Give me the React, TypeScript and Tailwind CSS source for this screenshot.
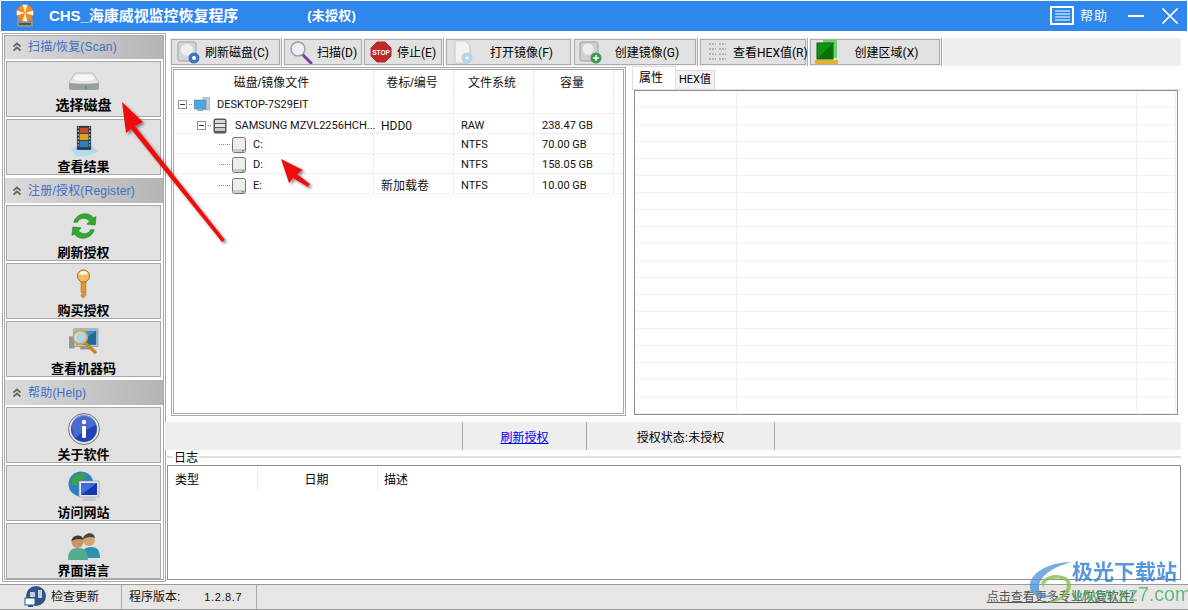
import type { ReactNode } from "react";

const cjk = "font-['Liberation_Sans','Noto_Sans_CJK_SC',sans-serif]";
const roboto = "font-['Roboto','Noto_Sans_CJK_SC',sans-serif]";

function Disk({ w = 14 }: { w?: number }) {
  return (
    <svg width={w} height={w + 2} viewBox="0 0 14 16">
      <rect x="0.5" y="0.5" width="13" height="15" rx="2" fill="#eceeea" stroke="#6f7570" />
      <rect x="1" y="12" width="12" height="3" fill="#c9cdc8" />
      <rect x="10" y="13" width="2" height="1.5" fill="#3cb043" />
    </svg>
  );
}

function DrivePlate() {
  return (
    <svg width="32" height="22" viewBox="0 0 32 22">
      <path d="M7 3h18l6 9v5a2 2 0 0 1-2 2H3a2 2 0 0 1-2-2v-5z" fill="#9a9d9d" />
      <path d="M7 2h18l6 9.5c-2 2-28 2-30 0z" fill="#e6e7e6" stroke="#a5a8a8" strokeWidth=".6" />
      <ellipse cx="16" cy="7" rx="10" ry="3.2" fill="#f6f6f6" />
      <rect x="17" y="15" width="2" height="3" fill="#46b04a" />
    </svg>
  );
}

function FilmIcon() {
  return (
    <svg width="34" height="32" viewBox="0 0 34 36">
      <path d="M2 27 L11 23 H26 L33 30 L20 35 H8z" fill="#a9d8f0" opacity=".8" />
      <rect x="9" y="1" width="16" height="27" fill="#26394c" />
      <rect x="12" y="3" width="10" height="6" fill="#c74a22" />
      <rect x="12" y="10" width="10" height="7" fill="#e2a11d" />
      <rect x="12" y="18" width="10" height="7" fill="#2f82b8" />
      <path d="M10 3h1M10 7h1M10 11h1M10 15h1M10 19h1M10 23h1M23 3h1M23 7h1M23 11h1M23 15h1M23 19h1M23 23h1" stroke="#d8e3ea" strokeWidth="2" />
    </svg>
  );
}

function RefreshIcon() {
  return (
    <svg width="26" height="30" viewBox="0 0 28 32">
      <path d="M3 12C5 3 18-1 24 7l3-1-1 9-9-1 3-3C16 6 9 7 7 12z" fill="#32a92c" stroke="#1c7a1c" strokeWidth=".6" />
      <path d="M25 20C23 29 10 33 4 25l-3 1 1-9 9 1-3 3c4 5 11 4 13-1z" fill="#32a92c" stroke="#1c7a1c" strokeWidth=".6" />
    </svg>
  );
}

function KeyIcon() {
  return (
    <svg width="15" height="30" viewBox="0 0 16 32">
      <path d="M5.500 13h5v15l-2.500 3-2.500-2v-2h1.500v-2h-1.500z" fill="#e0962a" stroke="#a5671a" strokeWidth=".6" />
      <circle cx="8" cy="7.500" r="6.500" fill="#f4bb63" stroke="#a5671a" />
      <path d="M3.500 6a4.500 4 0 0 1 9 0z" fill="#fbf3e3" />
    </svg>
  );
}

function MachineIcon() {
  return (
    <svg width="30" height="28" viewBox="0 0 32 30">
      <rect x="0" y="10" width="6" height="13" fill="#8d98a1" />
      <rect x="5" y="2" width="26" height="19" fill="#b5c3cb" stroke="#74838d" strokeWidth=".6" />
      <rect x="8" y="4" width="21" height="15" fill="#3b8fc4" />
      <path d="M8 19 29 4v15z" fill="#1f6a9e" />
      <rect x="12" y="21" width="11" height="3" fill="#87919a" />
      <path d="M18 18l10 9" stroke="#c58a1d" strokeWidth="3.500" strokeLinecap="round" />
      <circle cx="12" cy="11" r="7.500" fill="#d7ecf6" fillOpacity=".75" stroke="#d9a437" strokeWidth="2" />
    </svg>
  );
}

function InfoIcon() {
  return (
    <svg width="32" height="32" viewBox="0 0 32 32">
      <circle cx="16" cy="16" r="15.500" fill="#e3e3e3" stroke="#777" />
      <circle cx="16" cy="16" r="13" fill="#2243b8" />
      <path d="M4 15a12 12 0 0 1 24-3C22 14 12 20 8 25 5 22 4 19 4 15z" fill="#6080da" opacity=".65" />
      <circle cx="16" cy="9" r="2.200" fill="#fff" />
      <rect x="14" y="13" width="4" height="12" rx="1" fill="#fff" />
    </svg>
  );
}

function GlobeIcon() {
  return (
    <svg width="32" height="32" viewBox="0 0 32 32">
      <circle cx="13" cy="13" r="12.500" fill="#2f7fc4" />
      <path d="M5 6c4-4 11-5 14-2l-3 4-5 1-1 5-4 1-3-3z" fill="#3aa541" />
      <path d="M12 18l5 1 1 4-4 2z" fill="#3aa541" />
      <rect x="11" y="10" width="20" height="16" fill="#e8e8e8" stroke="#8a8a8a" strokeWidth=".6" />
      <rect x="13" y="12" width="16" height="12" fill="#1238b8" />
      <path d="M13 12h16L13 24z" fill="#3d6cdc" />
      <path d="M16 26h10l3 4H14z" fill="#c9c9c9" />
    </svg>
  );
}

function PeopleIcon() {
  return (
    <svg width="32" height="28" viewBox="0 0 32 28">
      <path d="M14 26c0-8 3-11 9-11s9 3 9 11z" fill="#2d93ad" />
      <circle cx="21" cy="8" r="6" fill="#d4a273" />
      <path d="M15 7c0-6 11-9 12-1-4-2-8-1-12 1z" fill="#444" />
      <path d="M0 28c0-9 3-12 10-12s9 3 10 12z" fill="#53ab8c" />
      <circle cx="9.500" cy="10" r="6" fill="#ca9466" />
      <path d="M3.500 9c0-6 11-8 12-1-4-2-8-1-12 1z" fill="#3a3a3a" />
    </svg>
  );
}

function DoubleChevron() {
  return (
    <svg width="8" height="10" viewBox="0 0 8 10" fill="none" stroke="#666" strokeWidth="1.800">
      <path d="M.5 4.500 4 1.500l3.500 3M.5 8.500 4 5.500l3.500 3" />
    </svg>
  );
}

function SideHeader({ label, first }: { label: string; first?: boolean }) {
  return (
    <div
      className={`-ml-[1px] flex shrink-0 items-center bg-gradient-to-r from-[#dcdcdc] to-[#b4b4b4] pl-[9px] ${first ? "-mt-[1px] h-[24px]" : "mt-[1px] h-[25px]"}`}
    >
      <DoubleChevron />
      <span className="ml-[7px] text-[12px] tracking-[0.2px] text-[#3b6fc9]">{label}</span>
    </div>
  );
}

function SideButton({ icon, label, top = 5, big, bottom = 0 }: { icon: ReactNode; label: string; top?: number; big?: boolean; bottom?: number }) {
  return (
    <div className="relative ml-[1px] mr-[2px] flex h-[56px] shrink-0 flex-col items-center border border-[#a9a9a9] bg-[#e1e1e1]">
      <div className="flex justify-center" style={{ marginTop: top }}>{icon}</div>
      <span
        className={`absolute left-0 right-0 text-center font-bold leading-[15px] text-black ${big ? "text-[14px]" : "text-[13px]"}`}
        style={{ bottom }}
      >
        {label}
      </span>
    </div>
  );
}

function ToolBtn({ w, icon, label, ml = 0, pad = 9 }: { w: number; icon: ReactNode; label: string; ml?: number; pad?: number }) {
  return (
    <div className="flex h-[26px] shrink-0 items-center border border-[#ababab] bg-[#e1e1e1]" style={{ width: w, marginLeft: ml }}>
      <div className="flex h-full w-[32px] shrink-0 items-center justify-center">{icon}</div>
      <span className={`flex-1 pt-[2px] text-center text-[12px] whitespace-nowrap text-black ${roboto}`} style={{ paddingRight: pad }}>{label}</span>
    </div>
  );
}

function Sep() {
  return <div className="ml-[1px] h-[28px] w-[2px] shrink-0 border-l border-r border-l-[#ababab] border-r-white" />;
}

const rows = [
  { level: 0, name: "DESKTOP-7S29EIT", tag: "", fs: "", size: "" },
  { level: 1, name: "SAMSUNG MZVL2256HCH...", tag: "HDD0", fs: "RAW", size: "238.47 GB" },
  { level: 2, name: "C:", tag: "", fs: "NTFS", size: "70.00 GB" },
  { level: 2, name: "D:", tag: "", fs: "NTFS", size: "158.05 GB" },
  { level: 2, name: "E:", tag: "新加载卷", fs: "NTFS", size: "10.00 GB" },
];

function Expander() {
  return (
    <span className="flex h-[9px] w-[9px] shrink-0 items-center justify-center border border-[#8a94a6] bg-white">
      <span className="h-[1px] w-[5px] bg-[#333]" />
    </span>
  );
}

function TreeRow({ r }: { r: (typeof rows)[number] }) {
  return (
    <div className={`grid h-[20px] grid-cols-[200px_80px_80px_80px] border-b border-dotted border-[#e4e4e4] text-[11px] text-[#111] ${roboto}`}>
      <div className="flex items-center border-r border-dotted border-[#e4e4e4] pt-[2px]">
        {r.level === 0 && (
          <div className="ml-[4px] flex items-center">
            <Expander />
            <span className="mx-[2px] w-[3px] border-t border-dotted border-[#888]" />
            <svg width="16" height="15" viewBox="0 0 16 15">
              <rect x="9" y="0" width="7" height="13" fill="#c3cbd6" stroke="#7d8ba0" strokeWidth=".5" />
              <rect x="0" y="3" width="12" height="9" fill="#4ea6dd" stroke="#5f87a8" strokeWidth=".6" />
              <rect x="3" y="12" width="6" height="2" fill="#7fb2d4" />
            </svg>
            <span className="ml-[7px] pt-[1px]">{r.name}</span>
          </div>
        )}
        {r.level === 1 && (
          <div className="ml-[23px] flex items-center">
            <Expander />
            <span className="mx-[2px] w-[3px] border-t border-dotted border-[#888]" />
            <svg width="14" height="16" viewBox="0 0 14 16">
              <rect x="0.500" y="0.500" width="13" height="15" rx="2" fill="#555c5a" />
              <rect x="2" y="2" width="10" height="3" fill="#d7d9d8" />
              <rect x="2" y="6" width="10" height="3" fill="#e8e9e8" />
              <rect x="2" y="10" width="10" height="3" fill="#c9cbca" />
            </svg>
            <span className="ml-[8px] whitespace-nowrap pt-[1px]">{r.name}</span>
          </div>
        )}
        {r.level === 2 && (
          <div className="ml-[45px] flex items-center">
            <span className="mr-[2px] w-[11px] border-t border-dotted border-[#888]" />
            <Disk />
            <span className="ml-[7px] pt-[1px]">{r.name}</span>
          </div>
        )}
      </div>
      <div className="flex items-center border-r border-dotted border-[#e4e4e4] pl-[7px] pt-[3px] text-[12px]">{r.tag}</div>
      <div className="flex items-center border-r border-dotted border-[#e4e4e4] pl-[7px] pt-[3px]">{r.fs}</div>
      <div className="flex items-center border-r border-dotted border-[#e4e4e4] pl-[8px] pt-[3px]">{r.size}</div>
    </div>
  );
}

export default function App() {
  return (
    <div className={`relative flex h-[610px] w-[1188px] flex-col overflow-hidden bg-white ${cjk}`}>
      {/* title bar */}
      <div className="mx-[1px] mt-[1px] flex h-[30px] shrink-0 items-center bg-[#2f86ec] text-white">
        <svg className="ml-[15px]" width="18" height="24" viewBox="0 0 18 24">
          <rect x="1" y="14" width="16" height="9" rx="1" fill="#8c8f8e" />
          <rect x="3" y="19" width="12" height="2" fill="#55595a" />
          <circle cx="9" cy="9" r="8.500" fill="#f08a1e" />
          <path d="M9 9 6.500 0.800h5zM9 9 .8 6.500v5zM9 9l8.200-2.500v5zM9 9l-2.500 8.200h5z" fill="#fdf0dc" />
        </svg>
        <span className="ml-[15px] text-[15px] font-bold tracking-[-0.05px]">CHS_海康威视监控恢复程序</span>
        <span className="ml-[69px] text-[13px] font-bold tracking-[0.2px]">(未授权)</span>
        <div className="ml-auto flex items-center">
          <svg width="24" height="20" viewBox="0 0 24 20" fill="none" stroke="#fff">
            <path d="M23 18H1V1h22v17h-6" strokeWidth="2" />
            <path d="M5 5h15M5 8h15M5 11h15M5 14h15" strokeWidth="1.200" />
          </svg>
          <span className="ml-[6px] text-[13px] tracking-[1px]">帮助</span>
          <span className="ml-[20px] h-[2px] w-[16px] bg-white" />
          <svg className="ml-[18px] mr-[9px]" width="16" height="16" viewBox="0 0 16 16" stroke="#fff" strokeWidth="1.600">
            <path d="M0.500 0.500l15 15M15.500 0.500l-15 15" />
          </svg>
        </div>
      </div>

      <div className="flex min-h-0 flex-1">
        {/* sidebar */}
        <div className="ml-[2px] mt-[2px] flex h-[549px] w-[164px] shrink-0 flex-col gap-[2px] overflow-hidden border-[3px] border-double border-[#a9a9a9]">
          <SideHeader first label="扫描/恢复(Scan)" />
          <SideButton big top={9} bottom={3} icon={<DrivePlate />} label="选择磁盘" />
          <SideButton icon={<FilmIcon />} label="查看结果" />
          <SideHeader label="注册/授权(Register)" />
          <SideButton icon={<RefreshIcon />} label="刷新授权" />
          <SideButton icon={<KeyIcon />} label="购买授权" />
          <SideButton icon={<MachineIcon />} label="查看机器码" />
          <SideHeader label="帮助(Help)" />
          <SideButton icon={<InfoIcon />} label="关于软件" />
          <SideButton icon={<GlobeIcon />} label="访问网站" />
          <SideButton top={8} icon={<PeopleIcon />} label="界面语言" />
        </div>

        {/* main */}
        <div className="ml-[1px] flex min-w-0 flex-1 flex-col pr-[7px]">
          {/* toolbar */}
          <div className="ml-[3px] mt-[7px] flex h-[28px] shrink-0 items-center bg-[#eeeeee] pl-[1px]">
            <ToolBtn w={109}
              label="刷新磁盘(C)"
              icon={<svg width="24" height="24" viewBox="0 0 24 24"><rect x="2" y="2" width="18" height="19" rx="2" fill="#d5d7d7" stroke="#9ba0a0" /><circle cx="11" cy="10" r="6" fill="#eee" /><circle cx="18" cy="18" r="5.500" fill="#3e78c4" /><circle cx="18" cy="18" r="2" fill="#fff" /></svg>} />
            <Sep />
            <ToolBtn w={78} ml={1} label="扫描(D)"
              icon={<svg width="24" height="24" viewBox="0 0 24 24"><path d="M13 14l9 9" stroke="#7b3fa0" strokeWidth="3" strokeLinecap="round" /><circle cx="9" cy="9" r="7" fill="#e9eef1" stroke="#9a9fa4" strokeWidth="1.500" /></svg>} />
            <ToolBtn w={78} ml={2} label="停止(E)" pad={12}
              icon={<svg width="24" height="24" viewBox="0 0 24 24"><path d="M8 1h8l7 7v8l-7 7H8l-7-7V8z" fill="#bb2b2b" stroke="#ddd" /><text x="12" y="14.500" fontSize="6.500" fontWeight="700" fill="#fff" textAnchor="middle" fontFamily="Liberation Sans">STOP</text></svg>} />
            <Sep />
            <ToolBtn w={125} ml={1} label="打开镜像(F)" pad={6}
              icon={<svg width="24" height="24" viewBox="0 0 24 24"><path d="M4 1h11l4 5v17H4z" fill="#f2f2f2" stroke="#c7c7c7" /><circle cx="16" cy="18" r="5.500" fill="#b8d3ec" /><circle cx="16" cy="18" r="1.500" fill="#fff" /></svg>} />
            <ToolBtn w={122} ml={3} label="创建镜像(G)" pad={8}
              icon={<svg width="24" height="24" viewBox="0 0 24 24"><rect x="1" y="2" width="18" height="19" rx="2" fill="#cfd1d1" stroke="#9ba0a0" /><circle cx="9" cy="9" r="5.500" fill="#ececec" /><circle cx="17" cy="18" r="5.500" fill="#3b9a4d" /><path d="M17 15v6M14 18h6" stroke="#fff" strokeWidth="1.500" /></svg>} />
            <Sep />
            <ToolBtn w={106} ml={1} label="查看HEX值(R)" pad={8}
              icon={<svg width="22" height="22" viewBox="0 0 22 22" stroke="#a7a7a7" strokeWidth="1.500" strokeDasharray="2 1"><path d="M3 3h7M13 3h7M3 8h7M13 8h7M3 13h7M13 13h7M3 18h7M13 18h7" /></svg>} />
            <Sep />
            <ToolBtn w={130} ml={1} label="创建区域(X)" pad={9}
              icon={<svg width="24" height="24" viewBox="0 0 24 24"><rect x="0" y="20" width="23" height="4" fill="#e0b32c" /><rect x="8" y="0" width="14" height="18" fill="#68d36a" /><rect x="2" y="3" width="16" height="16" fill="#129412" stroke="#0b5f0b" /><path d="M2 19 18 3v16z" fill="#0c6f0c" /></svg>} />
            <Sep />
          </div>

          <div className="mt-[1px] flex h-[349px] shrink-0">
            {/* tree panel */}
            <div className="ml-[4px] h-[349px] w-[455px] shrink-0 border-[3px] border-double border-[#a9a9a9]">
              <div className="grid h-[24px] grid-cols-[200px_80px_80px_80px] text-[12px] text-[#111]">
                <div className="flex items-center justify-center border-r border-dotted border-[#ddd] pt-[2px] pr-[4px]">磁盘/镜像文件</div>
                <div className="flex items-center justify-center border-r border-dotted border-[#ddd] pt-[2px] pr-[3px]">卷标/编号</div>
                <div className="flex items-center justify-center border-r border-dotted border-[#ddd] pt-[2px] pr-[3px]">文件系统</div>
                <div className="flex items-center justify-center border-r border-dotted border-[#ddd] pt-[2px] pr-[3px]">容量</div>
              </div>
              {rows.map((r) => (
                <TreeRow key={r.name} r={r} />
              ))}
            </div>

            {/* property panel */}
            <div className="ml-[6px] flex min-w-0 flex-1 flex-col">
              <div className="flex h-[23px] shrink-0 items-end border-b border-[#e0e0e0]">
                <div className="flex h-[23px] w-[44px] items-center border-x border-t border-[#e0e0e0] bg-white pl-[6px] text-[12px]">属性</div>
                <div className={`flex h-[19px] w-[39px] items-center justify-center border-r border-t border-[#d8d8d8] bg-[#f2f2f2] text-[11px] ${roboto}`}>HEX值</div>
              </div>
              <div className="ml-[2px] mr-[3px] h-[325px] border border-[#8e8e96]">
                <div className="grid h-full grid-cols-[102px_400px_39px] grid-rows-[repeat(19,17px)] overflow-hidden">
                  {Array.from({ length: 57 }).map((_, i) => (
                    <div key={i} className="border-r border-b border-[#efefef]" />
                  ))}
                </div>
              </div>
            </div>
          </div>

          {/* licence strip */}
          <div className="-ml-[2px] mt-[6px] flex h-[28px] shrink-0 bg-[#eeeeee] text-[12px] text-black">
            <div className="w-[298px] shrink-0 border-r border-[#a9a9a9]" />
            <div className="flex w-[124px] shrink-0 items-center justify-center border-r border-[#a9a9a9] pt-[3px] text-[#0000ee] underline">刷新授权</div>
            <div className="flex w-[188px] shrink-0 items-center justify-center border-r border-[#a9a9a9] pt-[3px]">授权状态:未授权</div>
          </div>

          {/* log */}
          <div className="relative mt-[6px] h-[124px] shrink-0 border-t-2 border-[#e0e0e0]">
            <span className="absolute top-[-7px] left-[6px] bg-white px-[1px] text-[12px] leading-[14px]">日志</span>
            <div className="mt-[7px] h-[115px] border border-[#8e8e96]">
              <div className="grid h-[24px] grid-cols-[90px_120px_1fr] text-[12px]">
                <div className="flex items-center border-r border-[#eeeeee] pt-[3px] pl-[7px]">类型</div>
                <div className="flex items-center justify-center border-r border-[#eeeeee] pt-[3px] pr-[2px]">日期</div>
                <div className="flex items-center pt-[3px] pl-[6px]">描述</div>
              </div>
            </div>
          </div>
        </div>
      </div>

      {/* status bar */}
      <div className="flex h-[26px] shrink-0 items-center border-y border-[#9a9a9a] bg-[#e8e6e5] text-[12px] text-[#111]">
        <div className="flex h-full w-[122px] shrink-0 items-center border-r border-[#a9a9a9] pl-[24px]">
          <svg width="22" height="22" viewBox="0 0 22 22">
            <circle cx="12" cy="10" r="10" fill="#2d5686" />
            <path d="M6 6h5v5H6zM14 4h4v8h-4z" fill="#fff" opacity=".7" />
            <rect x="1" y="12" width="10" height="7" fill="#fff" stroke="#2d5686" />
            <rect x="4" y="19" width="5" height="2" fill="#2d5686" />
          </svg>
          <span className="ml-[5px]">检查更新</span>
        </div>
        <div className="flex h-full w-[135px] shrink-0 items-center border-r border-[#a9a9a9] pl-[7px]">
          <span>程序版本:</span>
          <span className="ml-[24px] text-[11px] tracking-[0.6px]">1.2.8.7</span>
        </div>
        <span className="ml-auto mr-[54px] text-[12px] text-[#555] underline">点击查看更多专业恢复软件!</span>
      </div>

      {/* red annotation arrows */}
      <svg className="pointer-events-none absolute inset-0" width="1188" height="610" viewBox="0 0 1188 610">
        <defs>
          <filter id="sh" x="-20%" y="-20%" width="140%" height="140%">
            <feDropShadow dx="2" dy="2" stdDeviation="1.500" floodColor="#000" floodOpacity=".45" />
          </filter>
        </defs>
        <g filter="url(#sh)" fill="#ee1111">
          <path d="M122 102 L143 122 L135 126 L225 240 L222 242 L131 129 L126 133z" />
          <path d="M281 159 L303 170 L297 174 L310 184 L308 187 L293 178 L289 183z" />
        </g>
      </svg>

      {/* watermark */}
      <div className="pointer-events-none absolute top-[560px] left-[1028px] flex items-start">
        <svg className="absolute top-[0px] left-[0px]" width="46" height="46" viewBox="0 0 46 46" fill="none">
          <path d="M44 2C20 2 0 14 2 28c2 10 18 12 26 6-8 3-18 1-17-7C12 14 28 6 44 2z" fill="#4a90d9" opacity=".75" />
          <path d="M16 28c-2-8 12-12 20-8 4 2 4 8-1 14-4 5-12 8-16 9 12 0 24-8 24-18 0-12-24-14-30-2z" fill="#82c14b" opacity=".8" />
        </svg>
        <div className="ml-[44px] flex flex-col">
          <span className="text-[21px] leading-[24px] font-bold whitespace-nowrap text-[#2f7fd0] opacity-80">极光下载站</span>
          <span className="font-['Liberation_Sans',sans-serif] text-[19.5px] leading-[20px] whitespace-nowrap text-[#3fb463] opacity-80">www.xz7.com</span>
        </div>
      </div>
    </div>
  );
}
